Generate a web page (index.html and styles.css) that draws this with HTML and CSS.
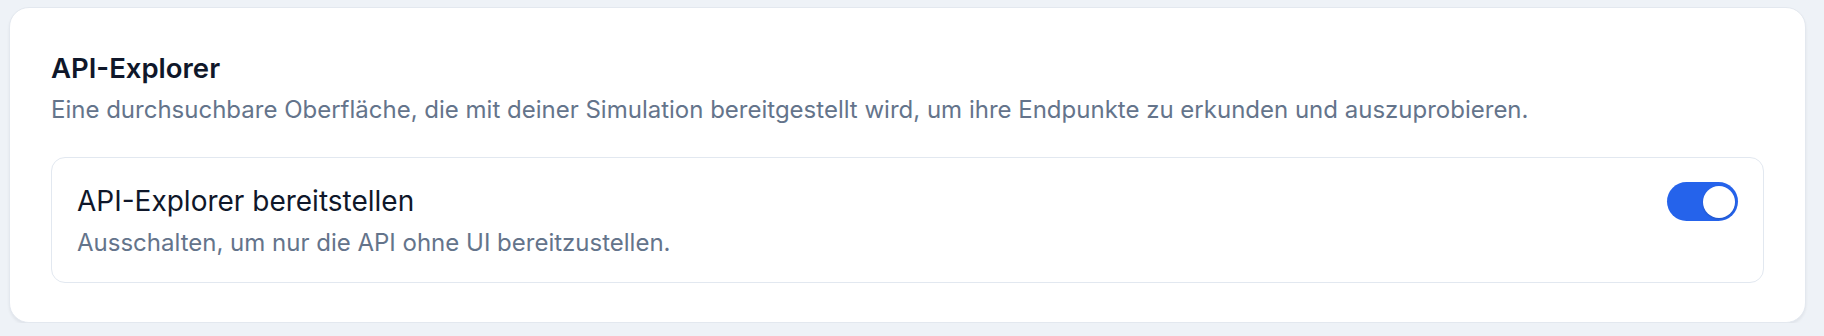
FILE: index.html
```html
<!DOCTYPE html>
<html lang="de">
<head>
<meta charset="utf-8">
<link rel="stylesheet" href="styles.css">
</head>
<body>
<section class="card">
  <h2 class="card-title">API-Explorer</h2>
  <p class="card-desc">Eine durchsuchbare Oberfläche, die mit deiner Simulation bereitgestellt wird, um ihre Endpunkte zu erkunden und auszuprobieren.</p>
  <div class="setting">
    <div class="setting-text">
      <div class="setting-title">API-Explorer bereitstellen</div>
      <div class="setting-desc">Ausschalten, um nur die API ohne UI bereitzustellen.</div>
    </div>
    <button class="toggle" role="switch" aria-checked="true"><span class="knob"></span></button>
  </div>
</section>
</body>
</html>
```

FILE: styles.css
```css
html, body {
  margin: 0;
  padding: 0;
}
body {
  background: #eef2f7;
  font-family: Inter, "Noto Sans", sans-serif;
  padding: 7px 18px 0 9px;
}
.card {
  background: #ffffff;
  border: 1px solid #e3e8ef;
  border-radius: 20px;
  box-shadow: 0 2px 3px rgba(15, 23, 42, 0.06);
  padding: 42px 41px 39px 41px;
  box-sizing: border-box;
  height: 316px;
}
.card-title {
  margin: 0;
  font-size: 27.5px;
  line-height: 36px;
  font-weight: 600;
  color: #0f172a;
}
.card-desc {
  margin: 8px 0 0 0;
  font-size: 24px;
  line-height: 32px;
  color: #64748b;
}
.setting {
  margin-top: 31px;
  border: 1px solid #e2e8f0;
  border-radius: 14px;
  padding: 24px 25px 23px 25px;
  display: flex;
  align-items: flex-start;
  justify-content: space-between;
}
.setting-title {
  font-size: 28px;
  line-height: 38px;
  font-weight: 400;
  color: #0f172a;
}
.setting-desc {
  margin-top: 7px;
  font-size: 24px;
  line-height: 32px;
  color: #64748b;
}
.toggle {
  width: 71px;
  height: 39px;
  border: none;
  border-radius: 20px;
  background: #2563eb;
  padding: 3.5px;
  display: flex;
  justify-content: flex-end;
  align-items: center;
  cursor: pointer;
  flex-shrink: 0;
}
.knob {
  width: 32px;
  height: 32px;
  border-radius: 50%;
  background: #ffffff;
  box-shadow: 0 1px 2px rgba(15, 23, 42, 0.2);
}
```
